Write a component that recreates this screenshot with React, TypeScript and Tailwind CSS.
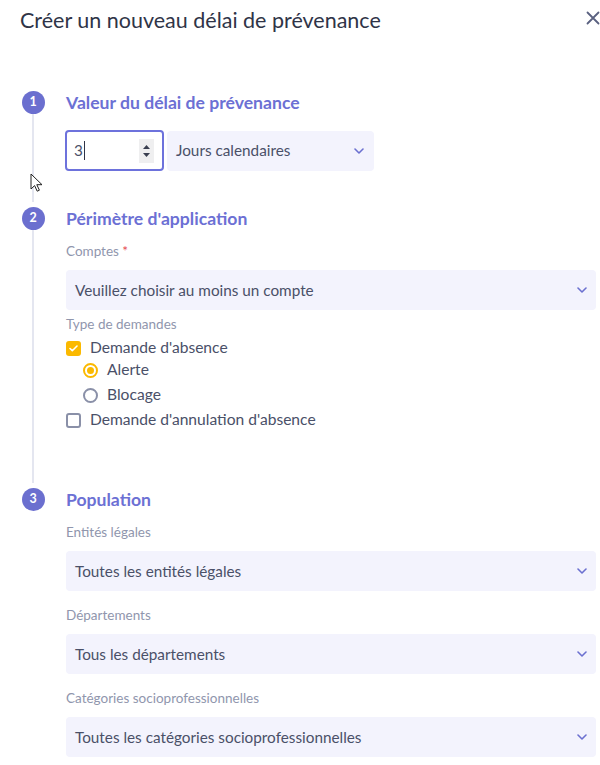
import React from "react";

const Chevron = () => (
  <svg width="10" height="6" viewBox="0 0 10 6" className="text-[#6b70d0]">
    <path d="M1 1l4 4 4-4" fill="none" stroke="currentColor" strokeWidth="1.6" strokeLinecap="round" strokeLinejoin="round" />
  </svg>
);

const Select = ({ value, className = "" }: { value: string; className?: string }) => (
  <div
    className={`flex items-center justify-between h-[40px] rounded-[4px] bg-[#f3f3fd] pl-[9px] pr-[9px] text-[15.3px] text-[#4a5068] ${className}`}
  >
    <span>{value}</span>
    <Chevron />
  </div>
);

const Label = ({ children, className = "" }: { children: React.ReactNode; className?: string }) => (
  <p className={`text-[13.5px] leading-[18px] text-[#9096ad] ${className}`}>{children}</p>
);

const Step = ({
  num,
  title,
  last,
  children,
  className = "",
}: {
  num: number;
  title: string;
  last?: boolean;
  children: React.ReactNode;
  className?: string;
}) => (
  <div className="flex pl-[22px]">
    <div className="flex flex-col items-center w-[22px]">
      <div className="w-[23px] h-[23px] -mt-[1px] rounded-full bg-[#6b6fcf] flex items-center justify-center text-white text-[12.5px] font-bold">
        {num}
      </div>
      {!last && <div className="w-[2px] flex-1 bg-[#e4e6f0] mb-[6px]" />}
    </div>
    <div className={`ml-[22px] w-[530px] ${className}`}>
      <h2 className="text-[17.6px] leading-[22px] font-bold text-[#6c70d4]">{title}</h2>
      {children}
    </div>
  </div>
);

const Checkbox = ({ checked }: { checked?: boolean }) =>
  checked ? (
    <span className="w-[15px] h-[15px] rounded-[3px] bg-[#fbb900] flex items-center justify-center">
      <svg width="9" height="7" viewBox="0 0 9 7">
        <path d="M1 3.5l2.3 2.2L8 1" fill="none" stroke="white" strokeWidth="1.6" strokeLinecap="round" strokeLinejoin="round" />
      </svg>
    </span>
  ) : (
    <span className="w-[15px] h-[15px] rounded-[3px] border-2 border-[#8a90a8] bg-white" />
  );

const Radio = ({ checked }: { checked?: boolean }) =>
  checked ? (
    <span className="w-[15px] h-[15px] rounded-full border-2 border-[#fbb900] flex items-center justify-center">
      <span className="w-[7px] h-[7px] rounded-full bg-[#fbb900]" />
    </span>
  ) : (
    <span className="w-[15px] h-[15px] rounded-full border-2 border-[#8a90a8]" />
  );

export default function App() {
  return (
    <div
      className="relative w-[600px] h-[765px] overflow-hidden bg-white"
      style={{ fontFamily: "Lato, 'Open Sans', sans-serif" }}
    >
      <div className="flex items-center justify-between pl-[20px] pt-[6px] h-[34px]">
        <h1 className="text-[21.5px] leading-[28px] text-[#2f3447]">Créer un nouveau délai de prévenance</h1>
        <svg width="14" height="14" viewBox="0 0 14 14" className="mt-[-4px]">
          <path d="M1.5 1.5l11 11M12.5 1.5l-11 11" stroke="#5a6180" strokeWidth="1.8" strokeLinecap="round" />
        </svg>
      </div>

      <div className="mt-[58px]">
        <Step num={1} title="Valeur du délai de prévenance" className="pb-[37px]">
          <div className="flex items-center mt-[16px] gap-[3px] -ml-[1px]">
            <div className="w-[99px] h-[41px] rounded-[4px] border-2 border-[#6d72dc] flex items-center justify-between pl-[7px] pr-[8px] text-[15.3px] text-[#4a5068]">
              <span className="flex items-center">
                3<span className="ml-[1px] w-[1px] h-[19px] bg-[#2f3447]" />
              </span>
              <span className="w-[15px] h-[24px] bg-[#efeff0] flex flex-col items-center justify-center gap-[4px]">
                <svg width="7" height="4" viewBox="0 0 7 4"><path d="M0 4L3.5 0 7 4z" fill="#3a3f50" /></svg>
                <svg width="7" height="4" viewBox="0 0 7 4"><path d="M0 0l3.5 4L7 0z" fill="#3a3f50" /></svg>
              </span>
            </div>
            <Select value="Jours calendaires" className="w-[207px] h-[39px] pr-[10px]" />
          </div>
        </Step>

        <Step num={2} title="Périmètre d'application" className="pb-[58px]">
          <Label className="mt-[12px]">
            Comptes <span className="text-[#e5484d]">*</span>
          </Label>
          <Select value="Veuillez choisir au moins un compte" className="mt-[10px]" />
          <Label className="mt-[5px]">Type de demandes</Label>
          <div className="mt-[4px] text-[15.6px] text-[#4a5068]">
            <div className="flex items-center gap-[9px] h-[22px]">
              <Checkbox checked />
              <span>Demande d'absence</span>
            </div>
            <div className="flex items-center gap-[9px] h-[22px] pl-[17px]">
              <Radio checked />
              <span>Alerte</span>
            </div>
            <div className="flex items-center gap-[9px] h-[22px] pl-[17px] mt-[3px]">
              <Radio />
              <span>Blocage</span>
            </div>
            <div className="flex items-center gap-[9px] h-[22px] mt-[3px]">
              <Checkbox />
              <span>Demande d'annulation d'absence</span>
            </div>
          </div>
        </Step>

        <Step num={3} title="Population" last>
          <Label className="mt-[12px]">Entités légales</Label>
          <Select value="Toutes les entités légales" className="mt-[10px]" />
          <Label className="mt-[15px]">Départements</Label>
          <Select value="Tous les départements" className="mt-[10px]" />
          <Label className="mt-[15px]">Catégories socioprofessionnelles</Label>
          <Select value="Toutes les catégories socioprofessionnelles" className="mt-[10px]" />
        </Step>
      </div>

      <svg width="14" height="20" viewBox="0 0 14 20" className="absolute left-[30px] top-[173px]">
        <path d="M1 1v15l3.6-3.4 2.6 5.6 2.2-1-2.6-5.5H12z" fill="white" stroke="#222" strokeWidth="1" strokeLinejoin="round" />
      </svg>
    </div>
  );
}
